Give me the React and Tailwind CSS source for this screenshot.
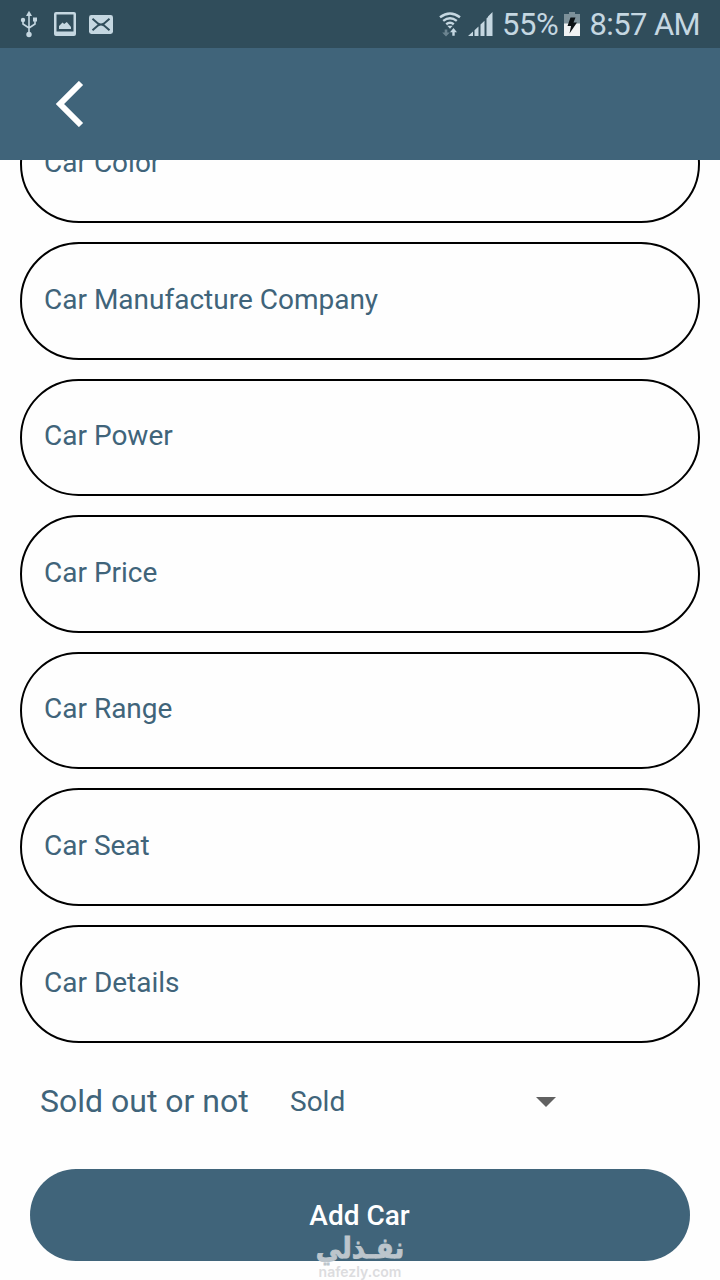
const fields = [
  "Car Color",
  "Car Manufacture Company",
  "Car Power",
  "Car Price",
  "Car Range",
  "Car Seat",
  "Car Details",
];

function UsbIcon() {
  return (
    <svg width="18" height="28" viewBox="0 0 18 28" fill="none" stroke="currentColor" strokeWidth="1.6">
      <path d="M9 5v19M3 10v4l6 4M15 9v5l-6 4" />
      <path d="M9 .8 12 6H6z" fill="currentColor" stroke="none" />
      <circle cx="3" cy="10" r="2.2" fill="currentColor" stroke="none" />
      <path d="M13 7.5h4v4h-4z" fill="currentColor" stroke="none" />
      <circle cx="9" cy="24.5" r="2.7" fill="currentColor" stroke="none" />
    </svg>
  );
}

function PictureIcon() {
  return (
    <svg width="22" height="24" viewBox="0 0 22 24" fill="currentColor">
      <path
        fillRule="evenodd"
        d="M2 0h18a2 2 0 0 1 2 2v20a2 2 0 0 1-2 2H2a2 2 0 0 1-2-2V2a2 2 0 0 1 2-2zM2.5 2.5v17h17v-17z"
      />
      <path d="M5 17v-3l3.5-3.6 1.7 1.6 2.6-2 4.2 5v2z" />
    </svg>
  );
}

function MailIcon() {
  return (
    <svg width="24" height="19" viewBox="0 0 24 19">
      <rect width="24" height="19" rx="2.4" fill="currentColor" />
      <path
        d="M3.5 3.8 9.2 8.7q2.8 1.6 5.6 0l5.7-4.9M3.5 15.2 9.2 10.3q2.8-1.6 5.6 0l5.7 4.9"
        fill="none"
        stroke="#304d5b"
        strokeWidth="2"
      />
    </svg>
  );
}

function WifiIcon() {
  return (
    <svg width="22" height="25" viewBox="0 0 22 25" fill="none" stroke="currentColor" strokeWidth="2.4">
      <path d="M1 5.2q10-7.6 20 0M4.2 8.9q6.8-5.2 13.6 0M7.2 12.2q3.8-3 7.6 0" />
      <path d="M8.3 13.7h5.4L11 16.8z" fill="currentColor" stroke="none" />
      <path d="M5.700 17.500v3H3.200L7 24.500l3.800-4H8.300v-3z" fill="currentColor" stroke="none" opacity="0.4" />
      <path d="M13.300 23.700v-3.500h-2.300l3.500-4.200 3.500 4.200h-2.300v3.500z" fill="currentColor" stroke="none" />
    </svg>
  );
}

function SignalIcon() {
  return (
    <svg width="25" height="24" viewBox="0 0 25 24" fill="currentColor">
      <path d="M0 24l5-4.500V24zM6.500 18.200l4-3.800V24h-4zM12.500 12.500l4-3.800V24h-4zM18.500 6.500V24h1.500V5zM20 4.500 24.500 0v24H20z" />
    </svg>
  );
}

function BatteryIcon() {
  return (
    <svg width="16" height="24" viewBox="0 0 16 24">
      <path d="M5 0h6v2h5v10H0V2h5z" fill="#7d919a" />
      <path d="M0 11.500h16V24H0z" fill="#f0f2f3" />
      <path d="M6.500 5.500h5l-2 5H13L5.500 21.500 7 14H3.500z" fill="#0b1114" />
    </svg>
  );
}

function StatusBar() {
  return (
    <div className="flex h-12 items-center justify-between bg-[#304d5b] px-5 text-[#c5d7e1]">
      <div className="flex items-center">
        <UsbIcon />
        <div className="ml-4">
          <PictureIcon />
        </div>
        <div className="ml-[13px]">
          <MailIcon />
        </div>
      </div>
      <div className="flex items-center">
        <WifiIcon />
        <div className="ml-[7px]">
          <SignalIcon />
        </div>
        <span className="ml-[9px] pt-[2px] text-[31px] leading-[46px] tracking-[-0.4px]">55%</span>
        <div className="ml-[6px]">
          <BatteryIcon />
        </div>
        <span className="ml-[9px] pt-[2px] text-[31px] leading-[46px] tracking-[-0.6px]">8:57 AM</span>
      </div>
    </div>
  );
}

function Field({ label }) {
  return (
    <div className="flex h-[117.6px] shrink-0 items-center rounded-[60px] border-2 border-black px-[22px] pb-[2.2px] text-[28px]">
      {label}
    </div>
  );
}

export default function App() {
  return (
    <div className="relative flex h-[1280px] w-[720px] flex-col overflow-hidden bg-[#fefefe] font-[Roboto,sans-serif] text-[#40647a]">
      <StatusBar />

      <header className="flex h-28 shrink-0 items-center bg-[#40647a] pl-[55px]">
        <svg width="29" height="46" viewBox="0 0 29 46" fill="none" stroke="#fff" strokeWidth="6">
          <path d="M26 2 5 23l21 21" />
        </svg>
      </header>

      <main className="flex flex-1 flex-col overflow-hidden px-5">
        {/* the list is scrolled, so the first field is partly under the header */}
        <div className="-mt-[54.6px] flex flex-col gap-[19px]">
          {fields.map((label) => (
            <Field key={label} label={label} />
          ))}
        </div>

        <div className="mt-[35px] flex h-12 shrink-0 items-center pl-5">
          <span className="w-[250px] pb-[2px] text-[32px]">Sold out or not</span>
          <span className="w-[246px] text-[28px]">Sold</span>
          <svg width="20" height="10" viewBox="0 0 20 10" fill="#616161">
            <path d="M0 0h20L10 10z" />
          </svg>
        </div>

        <button
          type="button"
          className="mx-[10px] mt-[43px] h-[92.5px] shrink-0 rounded-full bg-[#40647a] pt-[2px] pr-[1px] text-[28px] font-medium text-white"
        >
          Add Car
        </button>
      </main>

      {/* watermark */}
      <div className="absolute top-[1232px] left-[300px] w-[120px] text-center font-bold">
        <div
          dir="rtl"
          className="scale-y-110 font-['DejaVu_Sans',sans-serif] text-[26px] leading-[32px] text-[#bcc5cc] [-webkit-text-stroke:0.8px_#bcc5cc]"
        >
          نفـذلي
        </div>
        <div className="pt-[1px] font-[Inter,sans-serif] text-[14px] leading-[14px] font-semibold text-[#dcdcde]">
          nafezly.com
        </div>
      </div>
    </div>
  );
}
